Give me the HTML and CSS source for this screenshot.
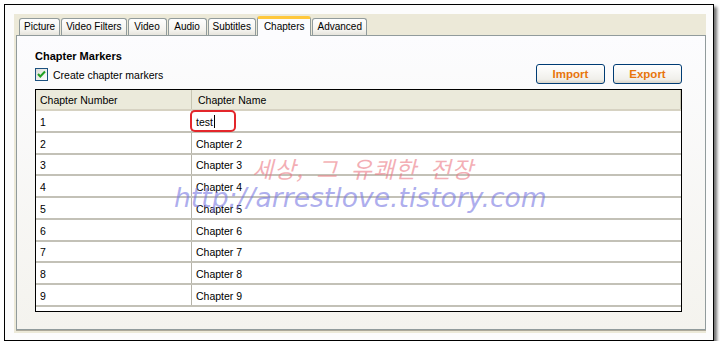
FILE: index.html
```html
<!DOCTYPE html>
<html lang="ko">
<head>
    <meta charset="UTF-8">
    <meta name="viewport" content="width=device-width, initial-scale=1.0">
    <title>Chapters</title>
    <link rel="stylesheet" href="styles.css">
</head>
<body>
    <div class="frame">
        <div class="dialog">
            <div class="tabs">
                <div class="tab">Picture</div>
                <div class="tab">Video Filters</div>
                <div class="tab">Video</div>
                <div class="tab">Audio</div>
                <div class="tab">Subtitles</div>
                <div class="tab active">Chapters</div>
                <div class="tab">Advanced</div>
            </div>

            <div class="pane">
                <div class="pane-head">
                    <div class="pane-title">
                        <h2>Chapter Markers</h2>
                        <label class="check">
                            <span class="check-box">
                                <svg width="11" height="11" viewBox="0 0 11 11">
                                    <path d="M2 5 L4.3 7.5 L9 2.5" fill="none" stroke="#21a121" stroke-width="2"/>
                                </svg>
                            </span>
                            Create chapter markers
                        </label>
                    </div>
                    <div class="buttons">
                        <button class="btn">Import</button>
                        <button class="btn">Export</button>
                    </div>
                </div>

                <div class="grid">
                    <div class="grid-head">
                        <div class="col-num">Chapter Number</div>
                        <div class="col-name">Chapter Name</div>
                    </div>
                    <div class="row">
                        <div class="num">1</div>
                        <div class="name">test<span class="caret"></span><span class="mark"></span></div>
                    </div>
                    <div class="row"><div class="num">2</div><div class="name">Chapter 2</div></div>
                    <div class="row"><div class="num">3</div><div class="name">Chapter 3</div></div>
                    <div class="row"><div class="num">4</div><div class="name">Chapter 4</div></div>
                    <div class="row"><div class="num">5</div><div class="name">Chapter 5</div></div>
                    <div class="row"><div class="num">6</div><div class="name">Chapter 6</div></div>
                    <div class="row"><div class="num">7</div><div class="name">Chapter 7</div></div>
                    <div class="row"><div class="num">8</div><div class="name">Chapter 8</div></div>
                    <div class="row"><div class="num">9</div><div class="name">Chapter 9</div></div>
                </div>
            </div>
        </div>

        <!-- blog watermark -->
        <div class="watermark ko">세상, 그 유쾌한 전장</div>
        <div class="watermark url">http://arrestlove.tistory.com</div>
    </div>
</body>
</html>
```

FILE: styles.css
```css
* {
    margin: 0;
    padding: 0;
    box-sizing: border-box;
}

body {
    background: #fff;
    font-family: "Liberation Sans", Arial, sans-serif;
    font-size: 10.5px;
    color: #000;
}

.frame {
    position: relative;
    margin: 4px 0 0 4px;
    width: 710px;
    height: 337px;
    border: 1px solid #000;
    box-shadow: 3px 3px 3px rgba(0, 0, 0, 0.55);
    background: #fcfcfc;
    padding: 9px 7px 7px 9px;
}

.dialog {
    height: 100%;
    background: #ece9d8;
    display: flex;
    flex-direction: column;
    padding: 0 0 3px 2px;
}

/* tabs */
.tabs {
    height: 21px;
    display: flex;
    align-items: flex-end;
    gap: 1px;
    padding-left: 3px;
}

.tab {
    height: 17px;
    line-height: 16px;
    padding: 0 4px;
    min-width: 39px;
    font-size: 10px;
    text-align: center;
    border: 1px solid #919b9c;
    border-bottom: none;
    border-radius: 3px 3px 0 0;
    background: linear-gradient(#fefefe, #f4f3ee 70%, #e6e4dc);
}

.tab.active {
    position: relative;
    z-index: 1;
    height: 20px;
    margin-bottom: -1px;
    padding: 0 6px;
    line-height: 16px;
    border-top: 3px solid #ffc83c;
    background: #fcfcfe;
}

/* tab page */
.pane {
    flex: 1;
    border: 1px solid #919b9c;
    background: linear-gradient(#fcfcfe, #f4f3ee);
    box-shadow: 0 1px 0 #aca899;
    padding: 13px 23px 0 18px;
}

.pane-head {
    display: flex;
    justify-content: space-between;
    align-items: flex-end;
}

h2 {
    font-size: 11px;
    font-weight: bold;
    line-height: 14px;
}

.check {
    display: flex;
    align-items: center;
    gap: 5px;
    height: 13px;
    margin-top: 5px;
}

.check-box {
    width: 13px;
    height: 13px;
    border: 1px solid #1c5180;
    background: linear-gradient(135deg, #dcdcd7, #fff);
}

.check-box svg {
    display: block;
}

.buttons {
    display: flex;
    gap: 8px;
    margin-bottom: -3px;
}

.btn {
    width: 69px;
    height: 20px;
    border: 1px solid #003c74;
    border-radius: 3px;
    background: linear-gradient(#fff, #f0efea 80%, #d8d3c7);
    font-family: "Liberation Sans", Arial, sans-serif;
    font-size: 11.5px;
    font-weight: bold;
    color: #e8750c;
}

/* chapter list */
.grid {
    height: 223px;
    margin-top: 8px;
    border: 1px solid #000;
    background: #fff;
}

.grid-head {
    display: flex;
    height: 21px;
    line-height: 20px;
    background: #ebeadb;
    border-bottom: 2px solid #d6d2c2;
}

.col-num {
    width: 156px;
    padding-left: 4px;
    border-right: 1px solid #c7c5b2;
}

.col-name {
    width: 489px;
    padding-left: 6px;
    border-right: 1px solid #c7c5b2;
}

.row {
    display: flex;
    height: 21.75px;
    border-bottom: 2px solid #c3c1b7;
}

.row .num {
    width: 156px;
    padding: 2px 0 0 4px;
    border-right: 1px solid #b5b3a8;
    display: flex;
    align-items: center;
}

.row .name {
    position: relative;
    flex: 1;
    padding: 2px 0 0 4px;
    display: flex;
    align-items: center;
}

.caret {
    width: 1px;
    height: 13px;
    margin-left: 1px;
    background: #000;
}

.mark {
    position: absolute;
    left: -2px;
    top: -1px;
    width: 46px;
    height: 22px;
    border: 2px solid #e3262b;
    border-radius: 5px;
}

/* watermark */
.watermark {
    position: absolute;
    font-style: italic;
    white-space: nowrap;
    pointer-events: none;
}

.ko {
    left: 247px;
    top: 151px;
    font-family: "Noto Sans CJK KR", sans-serif;
    font-size: 23px;
    line-height: 24px;
    letter-spacing: 1px;
    word-spacing: 5px;
    color: rgba(235, 120, 132, 0.6);
}

.url {
    left: 169px;
    top: 180px;
    font-family: "DejaVu Sans", sans-serif;
    font-size: 26.6px;
    line-height: 26px;
    color: rgba(120, 120, 225, 0.6);
}
```
